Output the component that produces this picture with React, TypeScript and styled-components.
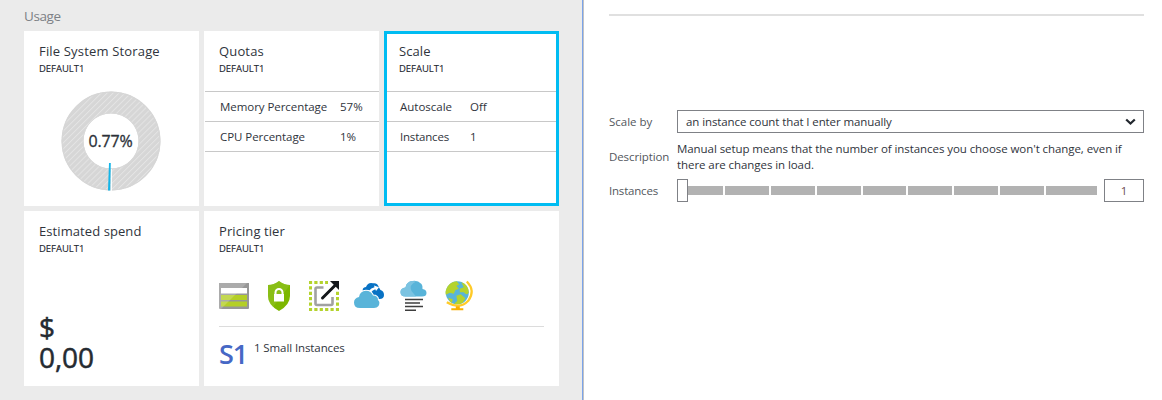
import React from "react";
import styled, { createGlobalStyle } from "styled-components";

const Global = createGlobalStyle`
  * { box-sizing: border-box; }
  body { margin: 0; background: #fff; font-family: "Open Sans", "Noto Sans", sans-serif; color: #2f343c; }
`;

const Page = styled.div`display: flex; width: 1162px; height: 400px; overflow: hidden;`;
const Blade = styled.section`
  width: 584px; flex: none; padding: 6px 0 0 24px; background: #ebebeb;
  border-right: 1px solid #c3c3c3; box-shadow: inset -1px 0 #7ba4ea;
`;
const BladeTitle = styled.h2`
  margin: 0; height: 25px; font-size: 13.5px; line-height: 20px; font-weight: 400; color: #7c8085; letter-spacing: -0.4px;
`;
const Tiles = styled.div`display: grid; grid-template-columns: repeat(3, 175px); grid-auto-rows: 175px; gap: 5px;`;
const Tile = styled.article<{ $wide?: boolean; $selected?: boolean }>`
  display: flex; flex-direction: column; background: #fff;
  grid-column: span ${(p) => (p.$wide ? 2 : 1)};
  ${(p) => p.$selected && "box-shadow: inset 0 0 0 3px #00bcf2;"}
`;
const TileHead = styled.header`padding: 11px 0 0 15px; height: 60px; flex: none; white-space: nowrap;`;
const TileTitle = styled.h3<{ $track?: number }>`
  margin: 0; font-size: 13px; line-height: 18px; font-weight: 400; letter-spacing: ${(p) => p.$track ?? 0.08}px;
`;
const TileSub = styled.div`
  font-size: 9.5px; line-height: 18px; letter-spacing: -0.03px; color: #22262e; -webkit-text-stroke: 0.12px #22262e;
`;
const DonutBox = styled.div`display: flex; padding-left: 37px; svg { display: block; }`;
const Rows = styled.div<{ $selected?: boolean }>`
  margin: 0 ${(p) => (p.$selected ? 3 : 0)}px 0 ${(p) => (p.$selected ? 3 : 1)}px; border-top: 1px solid #c8c8c8;
`;
const Row = styled.div<{ $label: number; $inset: number }>`
  display: grid; grid-template-columns: ${(p) => p.$label}px 1fr; height: 30px; padding-left: ${(p) => p.$inset}px;
  border-bottom: 1px solid #c8c8c8; font-size: 11.5px; line-height: 29px; white-space: nowrap;
`;
const Tracked = styled.span<{ $track: number }>`letter-spacing: ${(p) => p.$track}px;`;
const Spend = styled.div`
  margin: 41px 0 0 15px; font-size: 28px; line-height: 30px; letter-spacing: -0.1px; color: #252a31;
  -webkit-text-stroke: 0.5px #252a31;
`;
const Features = styled.div`
  display: flex; gap: 15px; height: 46px; margin: 10px 15px 0; border-bottom: 1px solid #dcdcdc;
  svg { display: block; flex: none; overflow: visible; }
`;
const Tier = styled.div`display: flex; gap: 7px; padding: 11px 0 0 15px;`;
const TierCode = styled.strong`font-size: 27px; line-height: 32px; font-weight: 600; letter-spacing: -1.2px; color: #4668c5; width: 28px;`;
const TierText = styled.span`font-size: 11.5px; line-height: 20px; letter-spacing: -0.1px;`;

const Settings = styled.main`flex: none; width: 560px; padding: 14px 0 0 25px;`;
const Divider = styled.div`height: 2px; background: #e0e0e0; margin-bottom: 94px;`;
const Field = styled.div<{ $height: number; $gap?: number }>`
  display: grid; grid-template-columns: 68px 467px; align-items: center; height: ${(p) => p.$height}px;
  margin-bottom: ${(p) => p.$gap ?? 0}px; font-size: 11.5px; white-space: nowrap;
`;
const Label = styled.label<{ $track: number }>`color: #53575d; letter-spacing: ${(p) => p.$track}px;`;
const Select = styled.div`
  display: flex; justify-content: space-between; align-items: center; height: 23px; border: 1px solid #7f8186; padding: 0 7px 0 8px;
`;
const Description = styled.p`margin: 0; padding-top: 2px; line-height: 16px; letter-spacing: -0.07px;`;
const Slider = styled.div`display: flex; align-items: center; height: 23px;`;
const Handle = styled.div`width: 11px; height: 23px; border: 1px solid #7f8186; background: #fff;`;
const Track = styled.div`
  display: grid; grid-template-columns: 35px repeat(3, 44px) 43px repeat(3, 44px) 51px; gap: 2px; height: 9px; width: 409px;
`;
const Segment = styled.div`background: #b2b2b2;`;
const Count = styled.div`
  margin-left: 7px; width: 40px; height: 23px; border: 1px solid #7f8186; text-align: center; line-height: 21px; color: #6b4c50;
`;

const Donut = () => (
  <svg width="100" height="100" viewBox="0 0 100 100">
    <defs>
      <pattern id="hatch" width="4.2" height="4.2" patternUnits="userSpaceOnUse" patternTransform="rotate(45)">
        <rect width="4.2" height="4.2" fill="#d6d6d6" />
        <rect width="1" height="4.2" fill="#e4e4e4" />
      </pattern>
    </defs>
    <circle cx="50" cy="50" r="38.5" fill="none" stroke="url(#hatch)" strokeWidth="22" />
    <circle cx="50" cy="50" r="49" fill="none" stroke="#d6d6d6" />
    <circle cx="50" cy="50" r="28" fill="none" stroke="#d9d9d9" />
    <path d="M50.300 78V100" stroke="#fff" strokeWidth="1.2" />
    <path d="M48 72H49.800L49.200 99.500H47Z" fill="#14b5e8" />
    <text x="49.5" y="55.5" textAnchor="middle" fontSize="16" letterSpacing="-0.15" fill="#2b3038" stroke="#2b3038" strokeWidth="0.3">0.77%</text>
  </svg>
);

const TableIcon = () => (
  <svg width="30" height="30" viewBox="0 0 30 30">
    <path d="M0 2H30V27Q30 28 29 28H1Q0 28 0 27Z" fill="#979797" />
    <path d="M2 7H28V12.500H2Z" fill="#fff" />
    <path d="M2 14H28V19H2ZM2 20.500H28V25.500H2Z" fill="#b4cf26" />
    <path d="M0 2H28L2 28H0Z" fill="#fff" opacity=".2" />
  </svg>
);
const ShieldIcon = () => (
  <svg width="30" height="30" viewBox="0 0 30 30">
    <path d="M15 0Q20 4 26 4V15Q26 24 15 30Q4 24 4 15V4Q10 4 15 0Z" fill="#7db700" />
    <path d="M15 0Q20 4 26 4L9 26Q4 21 4 15V4Q10 4 15 0Z" fill="#96c52c" opacity=".5" />
    <path d="M11.500 14V11.500a3.500 3.500 0 0 1 7 0V14" fill="none" stroke="#fff" strokeWidth="2" />
    <rect x="10" y="13" width="10" height="7.500" fill="#fff" />
  </svg>
);
const ScaleIcon = () => (
  <svg width="30" height="30" viewBox="0 0 30 30">
    <rect x="1.5" y="1.5" width="27" height="27" fill="none" stroke="#b4d32d" strokeWidth="3" strokeDasharray="3.2 2.2" strokeDashoffset="1.6" />
    <path d="M19 0H30V10H19Z" fill="#fff" />
    <path d="M14.500 6.500H8Q6.500 6.500 6.500 8V22.500Q6.500 24 8 24H22Q23.500 24 23.500 22.500V16" fill="none" stroke="#a1a1a1" strokeWidth="2.600" />
    <path d="M13.500 17L26 4.500" stroke="#14171b" strokeWidth="3" strokeLinecap="round" />
    <path d="M21 0H30V9Z" fill="#14171b" />
  </svg>
);
const CloudsIcon = () => (
  <svg width="30" height="30" viewBox="0 0 30 30">
    <path d="M9 11Q7.500 6.500 12 6Q14 1 19 2.300Q23.500 1.500 25 6.500L26.500 9Q30 10 30 14Q30 18 25.500 18L18 17Z" fill="#0872c4" />
    <path d="M15 9.800Q17 6.800 20.500 6.200L20 4.400L25 6.300L22 10L21.300 8.200Q18.500 9 17.200 11.200Z" fill="#fff" />
    <path d="M6 27Q0 27 0 21.500Q0 17 5 16Q6 10 12 9.800Q17 9.800 19 14.500Q24 14.500 24 19Q26.500 21 24.500 25Q23 27 20 27Z" fill="#fff" stroke="#fff" strokeWidth="2" />
    <path d="M6 27Q0 27 0 21.500Q0 17 5 16Q6 10 12 9.800Q17 9.800 19 14.500Q24 14.500 24 19Q26.500 21 24.500 25Q23 27 20 27Z" fill="#59b4d9" />
  </svg>
);
const CloudListIcon = () => (
  <svg width="30" height="30" viewBox="0 0 30 30">
    <path d="M6.500 15.500Q1.500 15.500 1.500 11Q1.500 7 6.500 6.500Q7.500 .5 13.500 0Q18.500-1 22.500 3Q24 5 23.500 8Q27.500 8.500 27.500 12Q27.500 15.500 23 15.500Z" fill="#59b4d9" />
    <path d="M6.500 15.500Q1.500 15.500 1.500 11Q1.500 7 6.500 6.500Q7.500 .5 13.500 0Q16 0 17 .5Q9.500 4 12.500 10L17 15.500Z" fill="#7bc3e1" />
    <path d="M6 18.500H24M6 22H21M6 25.500H24M6 29.200H17" stroke="#3e3e3e" strokeWidth="1.500" />
  </svg>
);
const GlobeIcon = () => (
  <svg width="30" height="31" viewBox="-.8 .2 30 31">
    <circle cx="12.5" cy="12" r="11.5" fill="#59b4d9" />
    <path d="M3 5.500Q6 1 12 .5L14.500 4L11.500 5L14 8L10.500 9.500L9 13L5 12L1 14Q0 10 3 5.500ZM15 8L19 6.500L16.500 1.500Q24 4 24 12Q22 15 19 11.500H15ZM11.500 15L16 13.500L20.500 17.500L18 22Q13 24.500 9.500 23L12.500 20ZM3.500 17L8 18.500L7 22Q4 20 3.500 17Z" fill="#b4d32d" />
    <path d="M22 .8Q31 10 23.500 20Q15 29 2 21.500" fill="none" stroke="#ffca28" strokeWidth="2.200" />
    <path d="M11 25.500H15V27.500H18.500V29.500H6.500V27.500H11Z" fill="#f9b000" />
  </svg>
);

const Head = ({ title, track }: { title: string; track?: number }) => (
  <TileHead>
    <TileTitle $track={track}>{title}</TileTitle>
    <TileSub>DEFAULT1</TileSub>
  </TileHead>
);

export default function App() {
  return (
    <Page>
      <Global />
      <Blade>
        <BladeTitle>Usage</BladeTitle>
        <Tiles>
          <Tile>
            <Head title="File System Storage" track={0.17} />
            <DonutBox><Donut /></DonutBox>
          </Tile>
          <Tile>
            <Head title="Quotas" track={0.15} />
            <Rows>
              <Row $label={120} $inset={15}><Tracked $track={-0.06}>Memory Percentage</Tracked><Tracked $track={0}>57%</Tracked></Row>
              <Row $label={120} $inset={15}><Tracked $track={-0.06}>CPU Percentage</Tracked><Tracked $track={0}>1%</Tracked></Row>
            </Rows>
          </Tile>
          <Tile $selected>
            <Head title="Scale" />
            <Rows $selected>
              <Row $label={70} $inset={13}><Tracked $track={0}>Autoscale</Tracked><span>Off</span></Row>
              <Row $label={70} $inset={13}><Tracked $track={-0.2}>Instances</Tracked><span>1</span></Row>
            </Rows>
          </Tile>
          <Tile>
            <Head title="Estimated spend" />
            <Spend>$<br />0,00</Spend>
          </Tile>
          <Tile $wide>
            <Head title="Pricing tier" />
            <Features>
              <TableIcon /><ShieldIcon /><ScaleIcon /><CloudsIcon /><CloudListIcon /><GlobeIcon />
            </Features>
            <Tier><TierCode>S1</TierCode><TierText>1 Small Instances</TierText></Tier>
          </Tile>
        </Tiles>
      </Blade>
      <Settings>
        <Divider />
        <Field $height={23} $gap={6}>
          <Label $track={0}>Scale by</Label>
          <Select>
            <Tracked $track={-0.1}>an instance count that I enter manually</Tracked>
            <svg width="11" height="8" viewBox="0 0 11 8"><path d="M1.200 1.500L5.500 5.600L9.800 1.500" fill="none" stroke="#22272e" strokeWidth="2.200" /></svg>
          </Select>
        </Field>
        <Field $height={34} $gap={6}>
          <Label $track={-0.1}>Description</Label>
          <Description>Manual setup means that the number of instances you choose won't change, even if<br />there are changes in load.</Description>
        </Field>
        <Field $height={23}>
          <Label $track={-0.2}>Instances</Label>
          <Slider>
            <Handle />
            <Track>{Array.from({ length: 9 }, (_, i) => <Segment key={i} />)}</Track>
            <Count>1</Count>
          </Slider>
        </Field>
      </Settings>
    </Page>
  );
}
